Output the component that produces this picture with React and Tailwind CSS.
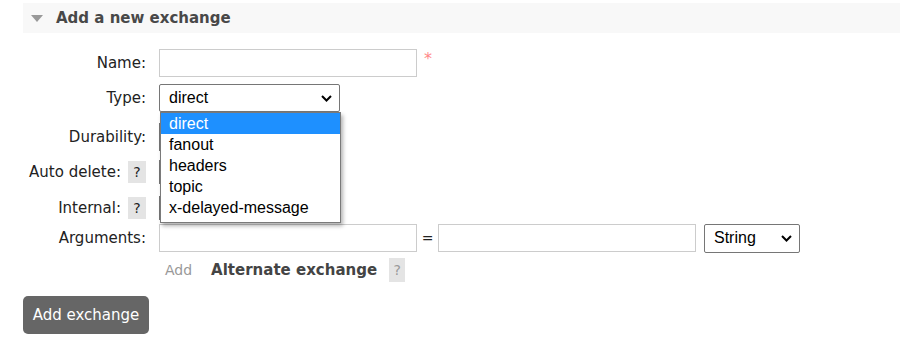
import React from 'react';

const verdana = { fontFamily: '"DejaVu Sans", Verdana, sans-serif' };
const arial = { fontFamily: '"Liberation Sans", Arial, sans-serif' };

function Chevron() {
  return (
    <svg width="11" height="7" viewBox="0 0 11 7" className="shrink-0">
      <path d="M1 1 L5.5 5.5 L10 1" fill="none" stroke="#000" strokeWidth="2" />
    </svg>
  );
}

function Help({ light }) {
  return (
    <span
      className={`inline-flex items-center justify-center w-[18px] h-[22px] bg-[#e4e4e4] text-[14px] ${light ? 'text-[#999]' : 'text-[#222]'}`}
    >
      ?
    </span>
  );
}

function Row({ label, help, className, children }) {
  return (
    <div className={`flex items-center ${className}`}>
      <div className="w-[146px] flex items-center justify-end gap-[7px] text-[15px] text-[#222]">
        <span>{label}</span>
        {help && <Help />}
      </div>
      <div className="ml-[13px] flex items-center">{children}</div>
    </div>
  );
}

const options = ['direct', 'fanout', 'headers', 'topic', 'x-delayed-message'];

export default function App() {
  return (
    <div className="w-[900px] h-[351px] bg-white relative overflow-hidden" style={verdana}>
      <div className="ml-[23px] mt-[3px] h-[30px] bg-[#f8f8f8] flex items-center">
        <svg width="12" height="7" viewBox="0 0 12 7" className="ml-[8px]">
          <path d="M0 0 L12 0 L6 7 Z" fill="#999" />
        </svg>
        <span className="ml-[13px] text-[15px] font-bold text-[#484848]">Add a new exchange</span>
      </div>

      <div className="mt-[13px] flex flex-col">
        <Row label="Name:" className="h-[34px]">
          <div className="w-[258px] h-[28px] border border-[#ccc]" />
          <span className="ml-[7px] -mt-[8px] text-[16px] text-[#f88]">*</span>
        </Row>
        <Row label="Type:" className="h-[36px]">
          <div className="relative">
            <div
              className="w-[181px] h-[28px] border border-[#767676] rounded-[2px] flex items-center justify-between pl-[9px] pr-[7px] text-[16px] text-black"
              style={arial}
            >
              <span>direct</span>
              <Chevron />
            </div>
            <div
              className="absolute left-[1px] top-[28px] w-[181px] bg-white border border-[#7a7a7a] shadow-[2px_3px_4px_rgba(0,0,0,0.3)] z-10 text-[16px] text-black"
              style={arial}
            >
              {options.map((o, i) => (
                <div
                  key={o}
                  className={`h-[21px] leading-[21px] pl-[8px] ${i === 0 ? 'bg-[#1e90ff] text-white' : ''}`}
                >
                  {o}
                </div>
              ))}
              <div className="h-[4px]" />
            </div>
          </div>
        </Row>
        <Row label="Durability:" className="h-[42px]">
          <div className="w-[100px] h-[28px] border border-[#767676]" />
        </Row>
        <Row label="Auto delete:" help className="h-[28px]">
          <div className="w-[60px] h-[24px] border border-[#767676]" />
        </Row>
        <Row label="Internal:" help className="h-[28px] mt-[8px]">
          <div className="w-[60px] h-[24px] border border-[#767676]" />
        </Row>
        <Row label="Arguments:" className="h-[28px] mt-[2px]">
          <div className="w-[258px] h-[28px] border border-[#ccc]" />
          <span className="w-[21px] text-center text-[14px] text-[#222]">=</span>
          <div className="w-[258px] h-[28px] border border-[#ccc]" />
          <div
            className="ml-[8px] w-[96px] h-[29px] border border-[#767676] rounded-[2px] flex items-center justify-between pl-[9px] pr-[7px] text-[16px] text-black"
            style={arial}
          >
            <span>String</span>
            <Chevron />
          </div>
        </Row>
        <div className="ml-[165px] mt-[6px] h-[24px] flex items-center">
          <span className="text-[14px] text-[#999]">Add</span>
          <span className="ml-[19px] text-[15px] font-bold text-[#444]">Alternate exchange</span>
          <span className="ml-[12px] inline-flex items-center justify-center w-[16px] h-[24px] bg-[#e4e4e4] text-[14px] text-[#999]">?</span>
        </div>
      </div>

      <button className="ml-[23px] mt-[14px] w-[126px] h-[38px] rounded-[5px] bg-[#666] text-white text-[15px] flex items-center justify-center">
        Add exchange
      </button>
    </div>
  );
}
